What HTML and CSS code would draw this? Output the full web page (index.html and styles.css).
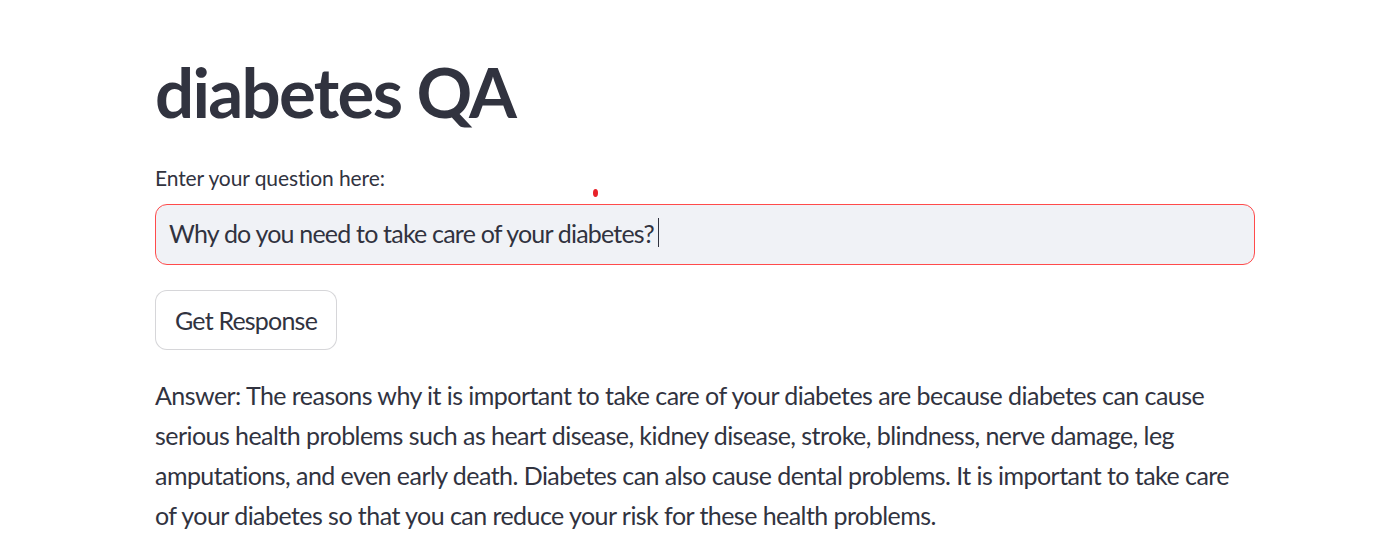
FILE: index.html
```html
<!DOCTYPE html>
<html lang="en">
<head>
<meta charset="utf-8">
<title>diabetes QA</title>
<link rel="stylesheet" href="styles.css">
</head>
<body>
<main class="app">
  <h1 class="title">diabetes QA</h1>
  <div class="field">
    <label class="label" for="q">Enter your question here:</label>
    <div class="input-wrap">
      <span class="dot"></span>
      <div class="input" id="q"><span class="value">Why do you need to take care of your diabetes?</span><span class="caret"></span></div>
    </div>
  </div>
  <button class="btn" type="button">Get Response</button>
  <p class="answer">Answer: The reasons why it is important to take care of your diabetes are because diabetes can cause serious health problems such as heart disease, kidney disease, stroke, blindness, nerve damage, leg amputations, and even early death. Diabetes can also cause dental problems. It is important to take care of your diabetes so that you can reduce your risk for these health problems.</p>
</main>
</body>
</html>
```
FILE: styles.css
```css
html, body {
  margin: 0;
  padding: 0;
  background: #ffffff;
}
body {
  font-family: "Lato", "Open Sans", sans-serif;
  color: #31333f;
}
.app {
  width: 1100px;
  margin-left: 155px;
  padding-top: 52px;
  display: flex;
  flex-direction: column;
}
.title {
  margin: 0;
  font-size: 69px;
  font-weight: 700;
  line-height: 80px;
  letter-spacing: -1.7px;
}
.field {
  margin-top: 33px;
  display: flex;
  flex-direction: column;
}
.label {
  font-size: 21px;
  line-height: 26px;
  letter-spacing: -0.1px;
  height: 39px;
}
.input-wrap {
  position: relative;
}
.dot {
  position: absolute;
  left: 438px;
  top: -15px;
  width: 5px;
  height: 8px;
  border-radius: 50%;
  background: #e8222a;
}
.input {
  box-sizing: border-box;
  height: 61px;
  border: 1px solid #ff4b4b;
  border-radius: 12px;
  background: #f0f2f6;
  padding: 0 13px 4px;
  display: flex;
  align-items: center;
  font-size: 25px;
  letter-spacing: -0.8px;
}
.caret {
  display: inline-block;
  width: 1px;
  height: 29px;
  background: #31333f;
  margin-left: 4px;
}
.btn {
  align-self: flex-start;
  margin-top: 25px;
  box-sizing: border-box;
  height: 60px;
  padding: 0 19px;
  border: 1px solid rgba(49, 51, 63, 0.2);
  border-radius: 12px;
  background: #ffffff;
  color: #31333f;
  font-family: inherit;
  font-size: 25px;
  letter-spacing: -0.8px;
}
.answer {
  margin: 25px 0 0;
  font-size: 25px;
  line-height: 40px;
  letter-spacing: -0.55px;
}
```
